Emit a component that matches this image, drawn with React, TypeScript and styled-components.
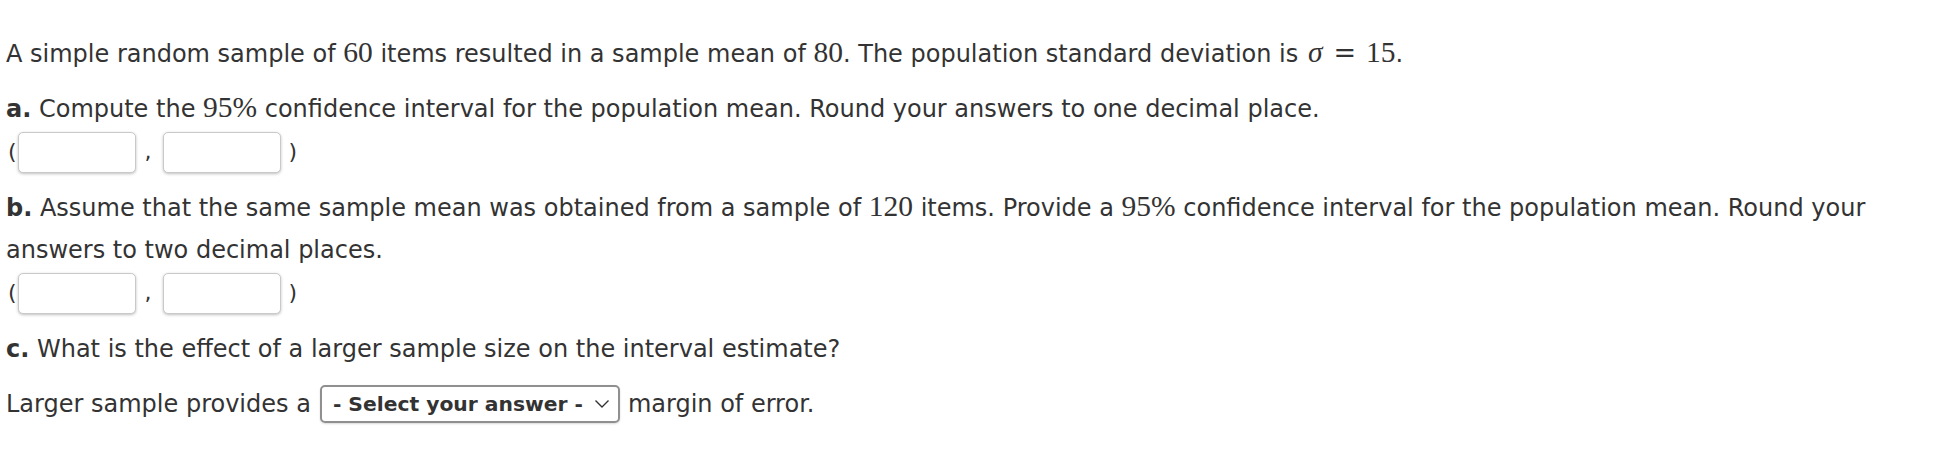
import styled, { createGlobalStyle } from "styled-components"

const GlobalStyle = createGlobalStyle`
  html, body {
    margin: 0;
    padding: 0;
    background: #fff;
  }
  body {
    font-family: "DejaVu Sans", Verdana, sans-serif;
    color: #333;
  }
`

const Page = styled.div`
  width: 1946px;
  height: 476px;
  padding: 33px 0 0 6px;
  box-sizing: border-box;
  display: flex;
  flex-direction: column;
`

const Para = styled.p<{ $top?: number }>`
  margin: ${p => p.$top ?? 0}px 0 0 0;
  font-size: 24px;
  line-height: 42px;
  width: 1915px;
`

const Label = styled.b`
  font-weight: bold;
`

const M = styled.span`
  font-family: "Liberation Serif", "Times New Roman", serif;
  font-size: 29.5px;
  line-height: 1;
`

const Sigma = styled(M)`
  font-style: italic;
  margin: 0 11px 0 2px;
`

const Eq = styled.span`
  font-family: "DejaVu Serif", serif;
  font-size: 27px;
  line-height: 1;
  margin-right: 10px;
`

const AnswerRow = styled.div<{ $top: number }>`
  margin-top: ${p => p.$top}px;
  display: flex;
  align-items: center;
  font-size: 22px;
  height: 42px;
`

const Paren = styled.span<{ $pad: string }>`
  padding: ${p => p.$pad};
  line-height: 42px;
`

const Box = styled.input`
  box-sizing: border-box;
  width: 118px;
  height: 41px;
  border: 1px solid #c9c9c9;
  border-radius: 5px;
  box-shadow: 0 1px 3px rgba(0, 0, 0, 0.25);
  background: #fff;
  outline: none;
  font-size: 18px;
`

const SelectLine = styled.div`
  margin-top: 13px;
  display: flex;
  align-items: center;
  font-size: 24px;
  height: 42px;
`

const Select = styled.div`
  box-sizing: border-box;
  margin: 0 8px 0 9px;
  width: 300px;
  height: 38px;
  border: 2px solid #8f8f8f;
  border-radius: 5px;
  display: flex;
  align-items: center;
  justify-content: space-between;
  padding: 0 8px 0 11px;
  font-weight: bold;
  font-size: 20.3px;
  color: #333;
  box-shadow: 0 1px 2px rgba(0, 0, 0, 0.15);
`

const Chevron = () => (
  <svg width="16" height="10" viewBox="0 0 16 10">
    <path d="M1.5 1.5 L8 8 L14.5 1.5" fill="none" stroke="#333" strokeWidth="1.4" />
  </svg>
)

const Interval = ({ top }: { top: number }) => (
  <AnswerRow $top={top}>
    <Paren $pad="0 1px 0 2px">(</Paren>
    <Box />
    <Paren $pad="0 11px 0 9px">,</Paren>
    <Box />
    <Paren $pad="0 0 0 8px">)</Paren>
  </AnswerRow>
)

export default function App() {
  return (
    <Page>
      <GlobalStyle />
      <Para>
        A simple random sample of <M>60</M> items resulted in a sample mean of <M>80</M>. The population standard
        deviation is <Sigma>σ</Sigma>
        <Eq>=</Eq>
        <M>15</M>.
      </Para>
      <Para $top={13}>
        <Label>a.</Label> Compute the <M>95%</M> confidence interval for the population mean. Round your answers to one
        decimal place.
      </Para>
      <Interval top={1} />
      <Para $top={14}>
        <Label>b.</Label> Assume that the same sample mean was obtained from a sample of <M>120</M> items. Provide a{" "}
        <M>95%</M> confidence interval for the population mean. Round your
        <br />
        answers to two decimal places.
      </Para>
      <Interval top={1} />
      <Para $top={14}>
        <Label>c.</Label> What is the effect of a larger sample size on the interval estimate?
      </Para>
      <SelectLine>
        Larger sample provides a
        <Select>
          - Select your answer -
          <Chevron />
        </Select>
        margin of error.
      </SelectLine>
    </Page>
  )
}
